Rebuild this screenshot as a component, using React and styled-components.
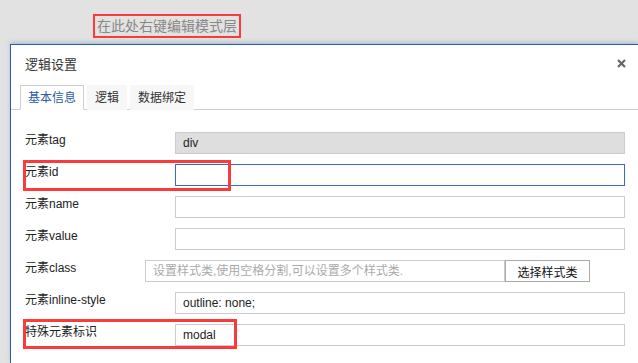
import React from "react";
import styled, { createGlobalStyle } from "styled-components";

const GlobalStyle = createGlobalStyle`
  html, body {
    margin: 0;
    padding: 0;
    background: #e2e2e2;
    overflow: hidden;
    font-family: "Liberation Sans", Arial, "Noto Sans CJK SC", sans-serif;
  }
`;

const Page = styled.div`
  width: 638px;
  height: 363px;
  overflow: hidden;
`;

const TopArea = styled.div`
  height: 44px;
  padding: 14px 0 0 93px;
  box-sizing: border-box;
`;

const LayerHint = styled.div`
  display: inline-block;
  height: 24px;
  line-height: 20px;
  box-sizing: border-box;
  border: 2px solid #fb3b3b;
  padding: 0 2px;
  font-size: 14px;
  color: #888;
`;

const Dialog = styled.div`
  margin-left: 10px;
  width: 628px;
  height: 319px;
  background: #fff;
  border-top: 1px solid #2b5ca8;
  border-left: 1px solid #2b5ca8;
  box-sizing: border-box;
  box-shadow: 0 -2px 4px rgba(43, 92, 168, 0.25);
`;

const Header = styled.div`
  height: 36px;
  display: flex;
  align-items: center;
  justify-content: space-between;
  padding: 0 12px 0 14px;
`;

const Title = styled.div`
  font-size: 13px;
  color: #333;
`;

const Close = styled.div`
  width: 9px;
  height: 9px;
  display: flex;
  cursor: pointer;
`;

const TabBar = styled.div`
  margin-top: 4px;
  display: flex;
  gap: 3px;
  padding-left: 9px;
  border-bottom: 1px solid #cfcfcf;
`;

const Tab = styled.div`
  height: 25px;
  line-height: 24px;
  box-sizing: border-box;
  padding: 0 7px;
  font-size: 12px;
  margin-bottom: -1px;
  color: ${props => props.$active ? "#2b5ca8" : "#333"};
  background: ${props => props.$active ? "#fff" : "#f7f7f7"};
  border: 1px solid ${props => props.$active ? "#cfcfcf" : "transparent"};
  border-bottom-color: ${props => props.$active ? "#fff" : "transparent"};
`;

const Form = styled.div`
  padding: 22px 13px 0 14px;
`;

const Row = styled.div`
  position: relative;
  display: flex;
  height: 22px;
  margin-bottom: 10px;
`;

const Label = styled.div`
  width: ${props => props.$width || 150}px;
  flex-shrink: 0;
  font-size: 12px;
  line-height: 16px;
  color: #222;
  white-space: nowrap;
`;

const Input = styled.input`
  flex: 1;
  min-width: 0;
  height: 22px;
  box-sizing: border-box;
  margin: 0;
  padding: 0 7px;
  font-family: inherit;
  font-size: 12px;
  color: #222;
  outline: none;
  background: ${props => props.$disabled ? "#dedede" : "#fff"};
  border: 1px solid ${props => props.$focused ? "#3b69bd" : "#c8ccd0"};
  &::placeholder {
    color: #aaa;
  }
`;

const PickButton = styled.button`
  width: 85px;
  height: 22px;
  margin: 0 35px 0 0;
  padding: 0;
  box-sizing: border-box;
  background: #fff;
  border: 1px solid #aaa;
  font-family: inherit;
  font-size: 12px;
  color: #111;
`;

const Mark = styled.div`
  position: absolute;
  left: -2px;
  top: ${props => props.$top}px;
  width: ${props => props.$w}px;
  height: ${props => props.$h}px;
  box-sizing: border-box;
  border: 3px solid #fb3b3b;
  pointer-events: none;
`;

const fields = [
  { label: "元素tag", value: "div", disabled: true },
  { label: "元素id", value: "", focused: true, mark: { top: -4, w: 208, h: 31 } },
  { label: "元素name", value: "" },
  { label: "元素value", value: "" },
  { label: "元素class", classRow: true },
  { label: "元素inline-style", value: "outline: none;" },
  { label: "特殊元素标识", value: "modal", mark: { top: -5, w: 214, h: 30 } },
];

const App = () => {
  return (
    <Page>
      <GlobalStyle />
      <TopArea>
        <LayerHint>在此处右键编辑模式层</LayerHint>
      </TopArea>
      <Dialog>
        <Header>
          <Title>逻辑设置</Title>
          <Close>
            <svg width="9" height="9" viewBox="0 0 9 9">
              <path d="M1 1L8 8M8 1L1 8" stroke="#666" strokeWidth="2.2" />
            </svg>
          </Close>
        </Header>
        <TabBar>
          <Tab $active>基本信息</Tab>
          <Tab>逻辑</Tab>
          <Tab>数据绑定</Tab>
        </TabBar>
        <Form>
          {fields.map((f) => (
            <Row key={f.label}>
              {f.classRow ? (
                <>
                  <Label $width={120}>{f.label}</Label>
                  <Input placeholder="设置样式类,使用空格分割,可以设置多个样式类." />
                  <PickButton>选择样式类</PickButton>
                </>
              ) : (
                <>
                  <Label>{f.label}</Label>
                  <Input
                    defaultValue={f.value}
                    readOnly={f.disabled}
                    $disabled={f.disabled}
                    $focused={f.focused}
                  />
                </>
              )}
              {f.mark && <Mark $top={f.mark.top} $w={f.mark.w} $h={f.mark.h} />}
            </Row>
          ))}
        </Form>
      </Dialog>
    </Page>
  );
};

export default App;
